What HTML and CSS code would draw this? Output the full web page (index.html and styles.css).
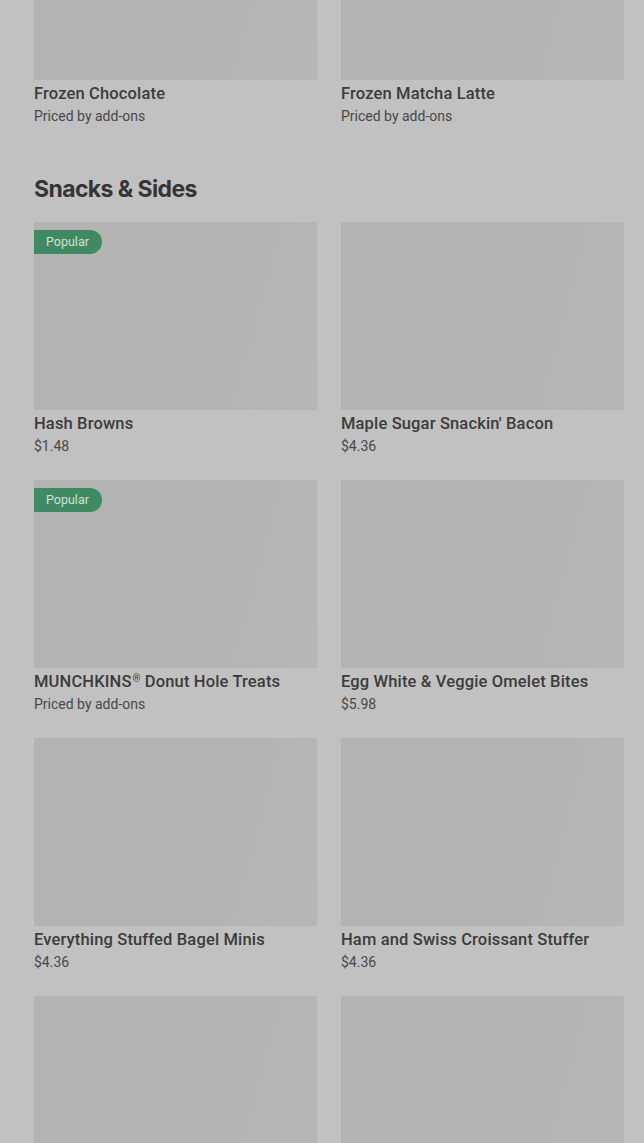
FILE: index.html
```html
<!DOCTYPE html>
<html>
<head>
<meta charset="utf-8">
<link rel="stylesheet" href="styles.css">
</head>
<body>
<div class="page">
  <div class="grid grid-top">
    <div class="card">
      <div class="thumb thumb-top"></div>
      <div class="title">Frozen Chocolate</div>
      <div class="price">Priced by add-ons</div>
    </div>
    <div class="card">
      <div class="thumb thumb-top"></div>
      <div class="title">Frozen Matcha Latte</div>
      <div class="price">Priced by add-ons</div>
    </div>
  </div>

  <h2 class="section-title">Snacks &amp; Sides</h2>

  <div class="grid">
    <div class="card">
      <div class="thumb"><span class="badge">Popular</span></div>
      <div class="title">Hash Browns</div>
      <div class="price">$1.48</div>
    </div>
    <div class="card">
      <div class="thumb"></div>
      <div class="title">Maple Sugar Snackin' Bacon</div>
      <div class="price">$4.36</div>
    </div>
    <div class="card">
      <div class="thumb"><span class="badge">Popular</span></div>
      <div class="title">MUNCHKINS<span class="reg">®</span> Donut Hole Treats</div>
      <div class="price">Priced by add-ons</div>
    </div>
    <div class="card">
      <div class="thumb"></div>
      <div class="title">Egg White &amp; Veggie Omelet Bites</div>
      <div class="price">$5.98</div>
    </div>
    <div class="card">
      <div class="thumb"></div>
      <div class="title">Everything Stuffed Bagel Minis</div>
      <div class="price">$4.36</div>
    </div>
    <div class="card">
      <div class="thumb"></div>
      <div class="title">Ham and Swiss Croissant Stuffer</div>
      <div class="price">$4.36</div>
    </div>
    <div class="card">
      <div class="thumb"></div>
      <div class="title">&nbsp;</div>
      <div class="price">&nbsp;</div>
    </div>
    <div class="card">
      <div class="thumb"></div>
      <div class="title">&nbsp;</div>
      <div class="price">&nbsp;</div>
    </div>
  </div>
</div>
</body>
</html>
```

FILE: styles.css
```css
html, body {
  margin: 0;
  padding: 0;
  background: #c1c1c1;
  overflow: hidden;
}
body {
  font-family: "Roboto", "Liberation Sans", sans-serif;
  color: #3a3a3a;
}
.page {
  padding: 0 20px 0 34px;
}
.grid {
  display: grid;
  grid-template-columns: 283px 283px;
  column-gap: 24px;
  row-gap: 24px;
}
.grid-top {
  margin-top: -108px;
}
.card {
  display: flex;
  flex-direction: column;
}
.thumb {
  position: relative;
  height: 188px;
  background: linear-gradient(105deg, #b3b3b3 0%, #b3b3b3 60%, #b6b6b6 100%);
}
.badge {
  position: absolute;
  left: 0;
  top: 8px;
  height: 24px;
  line-height: 24px;
  padding: 0 13px 0 12px;
  background: #3f8a62;
  color: #cfe2d6;
  font-size: 12.5px;
  border-radius: 0 12px 12px 0;
}
.title {
  margin-top: 4px;
  height: 20px;
  font-size: 16.5px;
  line-height: 20px;
  font-weight: 500;
  letter-spacing: 0.15px;
  color: #3c3c3c;
  white-space: nowrap;
}
.reg {
  font-size: 10px;
  line-height: 0;
  vertical-align: 5px;
  margin-left: 1px;
}
.price {
  margin-top: 2px;
  font-size: 14px;
  line-height: 20px;
  color: #484848;
}
.section-title {
  margin: 47px 0 17px;
  font-family: "Inter", "Liberation Sans", sans-serif;
  font-size: 23px;
  line-height: 32px;
  font-weight: 700;
  letter-spacing: -0.6px;
  color: #353535;
}
```
